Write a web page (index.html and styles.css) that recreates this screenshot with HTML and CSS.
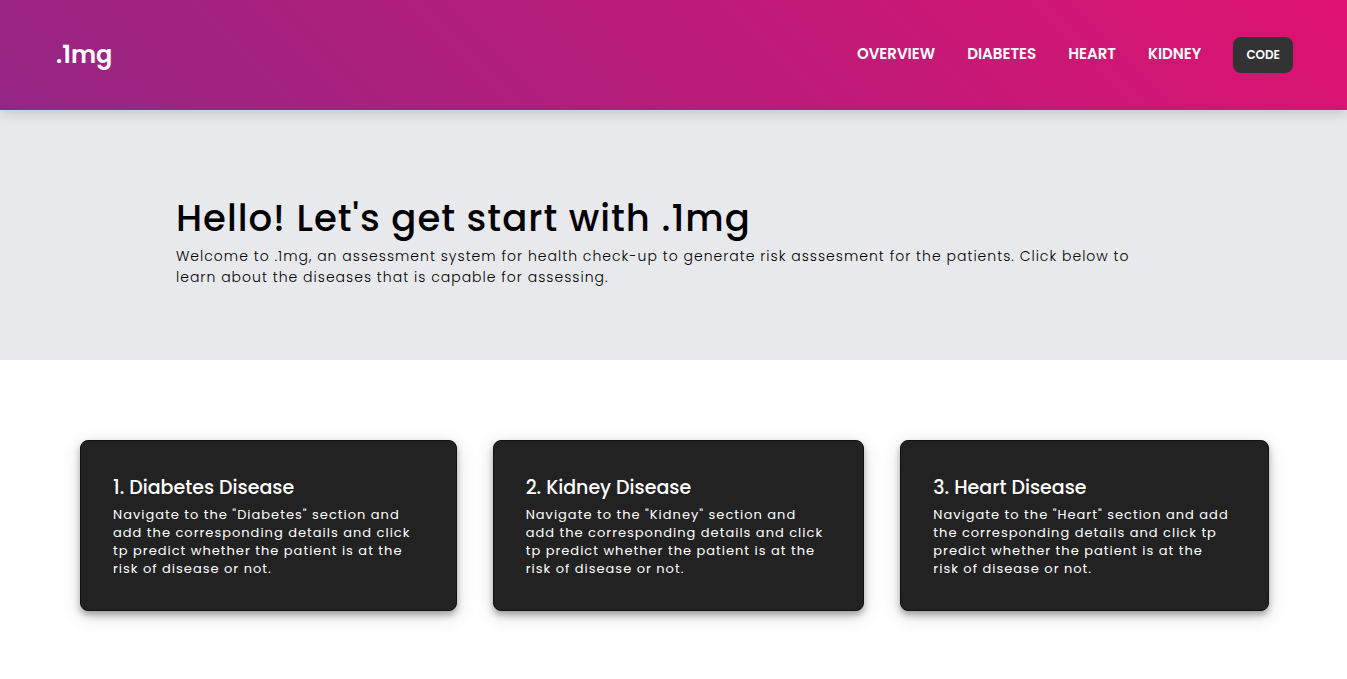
FILE: index.html
```html
<!DOCTYPE html>
<html lang="en">
<head>
<meta charset="utf-8">
<title>.1mg</title>
<link rel="stylesheet" href="styles.css">
</head>
<body>
<header class="header">
  <a class="logo" href="#">.1mg</a>
  <nav class="nav">
    <a class="nav-link" href="#">OVERVIEW</a>
    <a class="nav-link" href="#">DIABETES</a>
    <a class="nav-link" href="#">HEART</a>
    <a class="nav-link" href="#">KIDNEY</a>
    <button class="code" type="button">CODE</button>
  </nav>
</header>
<main>
  <section class="hero">
    <h1 class="hero-title">Hello! Let's get start with .1mg</h1>
    <p class="hero-text">Welcome to .1mg, an assessment system for health check-up to generate risk asssesment for the patients. Click below to learn about the diseases that is capable for assessing.</p>
  </section>
  <section class="cards">
    <article class="card">
      <h2 class="card-title">1. Diabetes Disease</h2>
      <p class="card-text">Navigate to the "Diabetes" section and add the corresponding details and click tp predict whether the patient is at the risk of disease or not.</p>
    </article>
    <article class="card">
      <h2 class="card-title">2. Kidney Disease</h2>
      <p class="card-text">Navigate to the "Kidney" section and<br>add the corresponding details and click tp predict whether the patient is at the risk of disease or not.</p>
    </article>
    <article class="card">
      <h2 class="card-title">3. Heart Disease</h2>
      <p class="card-text">Navigate to the "Heart" section and add the corresponding details and click tp predict whether the patient is at the<br>risk of disease or not.</p>
    </article>
  </section>
</main>
</body>
</html>
```

FILE: styles.css
```css
* { box-sizing: border-box; }
body {
  margin: 0;
  background: #fff;
  color: #000;
  font-family: Poppins, Inter, "Open Sans", sans-serif;
}
h1, h2, p { margin: 0; }
.header {
  position: relative;
  display: flex;
  align-items: center;
  justify-content: space-between;
  padding: 36px 54px 36px 56px;
  background: linear-gradient(45deg, #952684, #de1270);
  box-shadow: 0 4px 12px rgba(0, 0, 0, 0.15);
}
.logo {
  color: #fff;
  font-size: 24px;
  line-height: 38px;
  font-weight: 600;
  text-decoration: none;
}
.nav { display: flex; align-items: center; gap: 32px; }
.nav-link {
  padding-bottom: 2px;
  color: #fff;
  font-size: 15px;
  line-height: 20px;
  font-weight: 600;
  text-decoration: none;
}
.code {
  padding: 9px 13px;
  border: 0;
  border-radius: 8px;
  background: #333;
  color: #fff;
  font: inherit;
  font-size: 12px;
  line-height: 18px;
  font-weight: 600;
}
.hero {
  padding: 80px 176px 72px;
  background: #e8e9ed;
}
.hero-title {
  font-size: 37px;
  line-height: 56px;
  font-weight: 500;
  letter-spacing: 1px;
}
.hero-text {
  font-size: 14px;
  line-height: 21px;
  font-weight: 300;
  letter-spacing: 1px;
}
.cards {
  display: grid;
  grid-template-columns: 377fr 372fr 369fr;
  gap: 36px;
  padding: 80px 78px 64px 80px;
}
.card {
  padding: 32px;
  border: 1px solid #111;
  border-radius: 8px;
  background: #222;
  color: #fff;
  box-shadow: 0 4px 6px rgba(0, 0, 0, 0.3), 0 5px 20px rgba(0, 0, 0, 0.15);
}
.card-title {
  font-size: 19px;
  line-height: 29px;
  font-weight: 500;
}
.card-text {
  padding-top: 4px;
  font-size: 13px;
  line-height: 18px;
  letter-spacing: 1px;
}
```
